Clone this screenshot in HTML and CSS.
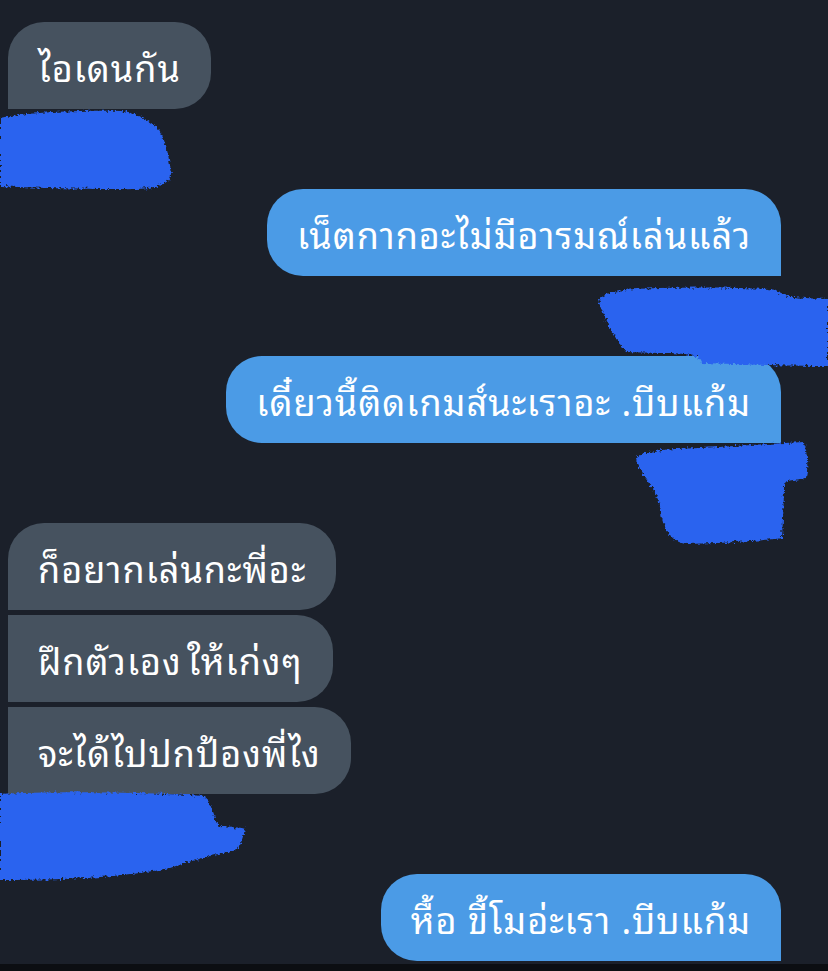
FILE: index.html
```html
<!DOCTYPE html>
<html lang="th">
<head>
<meta charset="utf-8">
<title>Chat</title>
<link rel="stylesheet" href="styles.css">
</head>
<body>
<div class="screen">
  <div class="chat">
    <div class="msg in solo">ไอเดนกัน</div>
    <div class="msg out solo sep">เน็ตกากอะไม่มีอารมณ์เล่นแล้ว</div>
    <div class="msg out solo sep">เดี๋ยวนี้ติดเกมส์นะเราอะ .บีบแก้ม</div>
    <div class="msg in first sep">ก็อยากเล่นกะพี่อะ</div>
    <div class="msg in mid tight narrow-space">ฝึกตัวเอง ให้เก่งๆ</div>
    <div class="msg in last tight">จะได้ไปปกป้องพี่ไง</div>
    <div class="msg out solo sep">หื้อ ขี้โมอ่ะเรา .บีบแก้ม</div>
  </div>
  <div class="bottom-bar"></div>

  <svg class="redact" width="828" height="971" viewBox="0 0 828 971" aria-hidden="true">
    <defs>
      <filter id="rough" x="-10%" y="-10%" width="120%" height="120%">
        <feTurbulence type="fractalNoise" baseFrequency="0.35" numOctaves="2" seed="4" result="n"/>
        <feDisplacementMap in="SourceGraphic" in2="n" scale="6" xChannelSelector="R" yChannelSelector="G"/>
      </filter>
    </defs>
    <g class="ink" filter="url(#rough)">
      <path d="M0 118 C30 112 80 110 122 111 C140 114 150 122 158 128 C166 140 170 160 171 176 C168 186 150 190 120 189 C80 189 30 188 0 186 Z"/>
      <path d="M599 300 C605 292 620 289 660 288 C700 287 750 287 776 290 C785 298 800 298 828 299 L828 366 C790 366 740 364 702 363 C700 356 690 353 660 353 L626 352 C612 335 604 318 599 300 Z"/>
      <path d="M636 458 C640 452 660 449 700 448 C740 446 780 443 804 442 C808 455 808 470 806 478 C795 480 786 480 784 484 C784 500 783 520 782 538 C760 541 720 543 685 544 C668 540 662 525 660 505 C658 490 641 478 636 458 Z"/>
      <path d="M0 794 C40 792 120 791 205 796 C212 805 214 818 218 826 C230 827 240 827 245 829 C243 838 240 846 236 850 C210 856 190 861 170 868 C130 876 80 880 0 880 Z"/>
    </g>
  </svg>
</div>
</body>
</html>
```

FILE: styles.css
```css
* { box-sizing: border-box; }

html, body {
  margin: 0;
  padding: 0;
  background: #1b202a;
}

.screen {
  position: relative;
  width: 828px;
  height: 971px;
  overflow: hidden;
  background: #1b202a;
  font-family: "Noto Sans Thai Looped", "Noto Sans Thai", "DejaVu Sans", "Noto Sans", sans-serif;
}

.chat {
  display: flex;
  flex-direction: column;
  padding: 22px 47px 0 8px;
}

.msg {
  height: 87px;
  display: flex;
  align-items: center;
  padding: 0 30px;
  font-size: 36px;
  letter-spacing: 1px;
  color: #ffffff;
  white-space: nowrap;
  border-radius: 36px;
}

.narrow-space { word-spacing: -5px; }

.in {
  align-self: flex-start;
  background: #46525f;
}

.out {
  align-self: flex-end;
  background: #4b9be6;
}

.in.solo { border-bottom-left-radius: 0; }
.out.solo { border-bottom-right-radius: 0; }
.in.first { border-bottom-left-radius: 0; }
.in.mid { border-top-left-radius: 0; border-bottom-left-radius: 0; }
.in.last { border-top-left-radius: 0; border-bottom-left-radius: 0; }

.sep { margin-top: 80px; }
.tight { margin-top: 5px; }

.bottom-bar {
  margin-top: 3px;
  height: 7px;
  background: #0c0e12;
}

.redact {
  position: absolute;
  left: 0;
  top: 0;
  pointer-events: none;
}

.ink path { fill: #2a63ef; }
```
